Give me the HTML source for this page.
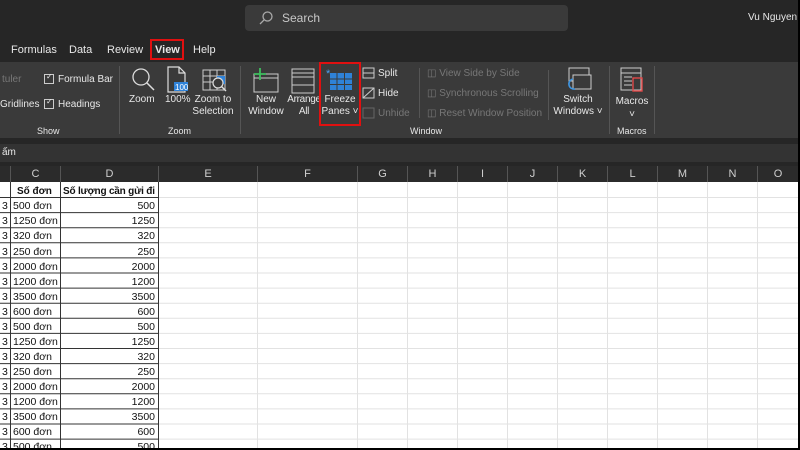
<!DOCTYPE html>
<html><head><meta charset="utf-8"><style>
*{margin:0;padding:0;box-sizing:border-box}
body{width:800px;height:450px;overflow:hidden;background:#000;font-family:"Liberation Sans",sans-serif;position:relative}
.a{position:absolute}
.t{color:#e8e8e8;font-size:10px;white-space:nowrap}
.g{color:#8a8a8a;font-size:10px;white-space:nowrap}
.c{text-align:center}
.sep{position:absolute;width:1px;background:#555}
.hd{position:absolute;top:166px;height:16px;color:#cfcfcf;font-size:11px;text-align:center;line-height:16px;border-left:1px solid #555}
</style></head><body>
<div class="a" style="left:0;top:0;width:798px;height:448px;background:#fff"></div>
<div class="a" style="left:0;top:0;width:798px;height:62px;background:#262626"></div>
<div class="a" style="left:245px;top:5px;width:323px;height:26px;background:#3a3a3a;border-radius:4px"></div>
<svg class="a" style="left:258px;top:10px" width="16" height="16"><circle cx="9.5" cy="6.5" r="4.5" fill="none" stroke="#aaa" stroke-width="1.3"/><line x1="6.3" y1="9.7" x2="2" y2="14" stroke="#aaa" stroke-width="1.3"/></svg>
<div class="a t" style="left:282px;top:11px;font-size:12px;color:#c8c8c8">Search</div>
<div class="a t" style="left:748px;top:12px;font-size:10px">Vu Nguyen I</div>
<div class="a t" style="left:11px;top:44px;font-size:11px">Formulas</div>
<div class="a t" style="left:69px;top:44px;font-size:11px">Data</div>
<div class="a t" style="left:107px;top:44px;font-size:11px">Review</div>
<div class="a" style="left:150px;top:39px;width:34px;height:21px;border:2px solid #e01010"></div>
<div class="a t" style="left:155px;top:44px;font-size:11px;font-weight:bold">View</div>
<div class="a t" style="left:193px;top:44px;font-size:11px">Help</div>
<div class="a" style="left:0;top:62px;width:798px;height:76px;background:#3a3a3a"></div>
<div class="a" style="left:0;top:138px;width:798px;height:28px;background:#262626"></div>
<div class="a" style="left:0;top:144px;width:798px;height:18px;background:#333"></div>
<div class="a t" style="left:2px;top:147px">ấm</div>
<div class="a g" style="left:2px;top:74px;color:#777">tuler</div>
<div class="a g" style="left:0px;top:99px;color:#e8e8e8">Gridlines</div>
<div class="a" style="left:44px;top:74px;width:10px;height:10px;border:1px solid #ccc"></div>
<div class="a t" style="left:46px;top:72px;font-size:8px">✓</div>
<div class="a t" style="left:58px;top:74px">Formula Bar</div>
<div class="a" style="left:44px;top:99px;width:10px;height:10px;border:1px solid #ccc"></div>
<div class="a t" style="left:46px;top:97px;font-size:8px">✓</div>
<div class="a t" style="left:58px;top:99px">Headings</div>
<div class="a t" style="left:37px;top:126px;font-size:9px">Show</div>
<div class="sep" style="left:119px;top:66px;height:68px"></div>
<svg class="a" style="left:129px;top:66px" width="28" height="28"><circle cx="12" cy="11" r="8" fill="none" stroke="#ddd" stroke-width="1.3"/><line x1="18" y1="17" x2="25" y2="24" stroke="#ddd" stroke-width="1.5"/></svg>
<div class="a t" style="left:129px;top:94px">Zoom</div>
<svg class="a" style="left:165px;top:66px" width="24" height="28"><path d="M3 1h11l6 6v19H3z" fill="none" stroke="#ddd" stroke-width="1.2"/><path d="M14 1v6h6" fill="none" stroke="#ddd" stroke-width="1.2"/><rect x="9" y="16" width="14" height="9" fill="#2f82d8"/><text x="10" y="24" font-size="8" fill="#fff" font-family="Liberation Sans">100</text></svg>
<div class="a t" style="left:165px;top:94px">100%</div>
<svg class="a" style="left:201px;top:68px" width="28" height="26"><rect x="2" y="2" width="22" height="20" fill="none" stroke="#ccc"/><path d="M2 8h22M2 14h22M9 2v20M16 2v20" stroke="#ccc"/><rect x="16" y="8" width="8" height="8" fill="#2f82d8"/><circle cx="17" cy="15" r="5" fill="#3a3a3a" stroke="#ddd" stroke-width="1.2"/><line x1="20.5" y1="18.5" x2="25" y2="23" stroke="#ddd" stroke-width="1.4"/></svg>
<div class="a t c" style="left:190px;top:94px;width:46px;line-height:12px">Zoom to<br>Selection</div>
<div class="a t" style="left:168px;top:126px;font-size:9px">Zoom</div>
<div class="sep" style="left:240px;top:66px;height:68px"></div>
<svg class="a" style="left:251px;top:66px" width="30" height="28"><rect x="3" y="8" width="24" height="18" fill="none" stroke="#ccc"/><path d="M3 12h24" stroke="#ccc"/><path d="M9 2v12M3 8h12" stroke="#3fbf5f" stroke-width="1.8"/></svg>
<div class="a t c" style="left:244px;top:94px;width:44px;line-height:12px">New<br>Window</div>
<svg class="a" style="left:289px;top:67px" width="28" height="28"><rect x="3" y="2" width="22" height="24" fill="none" stroke="#ccc"/><path d="M3 10h22M3 18h22M3 6h22" stroke="#ccc"/></svg>
<div class="a t c" style="left:284px;top:94px;width:40px;line-height:12px;letter-spacing:-0.3px">Arrange<br>All</div>
<div class="a" style="left:319px;top:62px;width:42px;height:64px;border:2px solid #e01010"></div>
<svg class="a" style="left:325px;top:66px" width="30" height="26"><rect x="5" y="7" width="22" height="17" fill="#2f82d8"/><path d="M5 13h22M5 18.5h22M12 7v17M19.5 7v17" stroke="#3a3a3a"/><text x="1" y="11" font-size="11" fill="#4aa0f0" font-family="Liberation Sans">*</text></svg>
<div class="a t c" style="left:320px;top:94px;width:40px;line-height:12px">Freeze<br>Panes ˅</div>
<svg class="a" style="left:362px;top:67px" width="13" height="12"><rect x="1" y="1" width="11" height="10" fill="none" stroke="#ccc"/><path d="M1 6h11" stroke="#ccc"/></svg>
<div class="a t" style="left:378px;top:68px">Split</div>
<svg class="a" style="left:362px;top:87px" width="13" height="12"><rect x="1" y="1" width="11" height="10" fill="none" stroke="#ccc"/><path d="M1 11L12 1" stroke="#ccc"/></svg>
<div class="a t" style="left:378px;top:88px">Hide</div>
<svg class="a" style="left:362px;top:107px" width="13" height="12"><rect x="1" y="1" width="11" height="10" fill="none" stroke="#666"/></svg>
<div class="a t" style="left:378px;top:108px;color:#777">Unhide</div>
<div class="sep" style="left:419px;top:68px;height:50px"></div>
<div class="a t" style="left:427px;top:68px;color:#777">◫ View Side by Side</div>
<div class="a t" style="left:427px;top:88px;color:#777">◫ Synchronous Scrolling</div>
<div class="a t" style="left:427px;top:108px;color:#777">◫ Reset Window Position</div>
<div class="a t" style="left:410px;top:126px;font-size:9px">Window</div>
<div class="sep" style="left:548px;top:70px;height:50px"></div>
<svg class="a" style="left:563px;top:66px" width="30" height="28"><rect x="6" y="2" width="20" height="13" fill="#3a3a3a" stroke="#ccc"/><rect x="10" y="9" width="18" height="14" fill="#3a3a3a" stroke="#ccc"/><path d="M10 13a5 5 0 0 0 2 10" fill="none" stroke="#3f95e0" stroke-width="1.6"/></svg>
<div class="a t c" style="left:551px;top:94px;width:54px;line-height:12px">Switch<br>Windows ˅</div>
<div class="sep" style="left:609px;top:66px;height:68px"></div>
<svg class="a" style="left:618px;top:66px" width="30" height="28"><rect x="3" y="2" width="20" height="22" fill="none" stroke="#ccc"/><path d="M3 7h20M6 11h8M6 15h8M6 19h8" stroke="#ccc"/><rect x="15" y="12" width="9" height="13" fill="none" stroke="#e04848" stroke-width="1.4"/></svg>
<div class="a t c" style="left:612px;top:95px;width:40px;line-height:13px">Macros<br>˅</div>
<div class="a t" style="left:617px;top:126px;font-size:9px">Macros</div>
<div class="sep" style="left:654px;top:66px;height:68px"></div>
<div class="a" style="left:0;top:166px;width:798px;height:16px;background:#2b2b2b"></div>
<div class="hd" style="left:10px;width:50px">C</div>
<div class="hd" style="left:60px;width:98px">D</div>
<div class="hd" style="left:158px;width:99px">E</div>
<div class="hd" style="left:257px;width:100px">F</div>
<div class="hd" style="left:357px;width:50px">G</div>
<div class="hd" style="left:407px;width:50px">H</div>
<div class="hd" style="left:457px;width:50px">I</div>
<div class="hd" style="left:507px;width:50px">J</div>
<div class="hd" style="left:557px;width:50px">K</div>
<div class="hd" style="left:607px;width:50px">L</div>
<div class="hd" style="left:657px;width:50px">M</div>
<div class="hd" style="left:707px;width:50px">N</div>
<div class="hd" style="left:757px;width:41px">O</div>
<svg class="a" style="left:0;top:182px" width="798" height="266">
<g stroke="#e2e2e2">
<path d="M257.5 0v266M357.5 0v266M407.5 0v266M457.5 0v266M507.5 0v266M557.5 0v266M607.5 0v266M657.5 0v266M707.5 0v266M757.5 0v266"/>
<path d="M158 15.5h640M158 30.6h640M158 45.7h640M158 60.8h640M158 75.9h640M158 91h640M158 106.1h640M158 121.2h640M158 136.3h640M158 151.4h640M158 166.5h640M158 181.6h640M158 196.7h640M158 211.8h640M158 226.9h640M158 242h640M158 257.1h640"/>
</g>
<g stroke="#333">
<path d="M10.5 0v266M60.5 0v266M158.5 0v266"/>
<path d="M0 15.5h158M0 30.6h158M0 45.7h158M0 60.8h158M0 75.9h158M0 91h158M0 106.1h158M0 121.2h158M0 136.3h158M0 151.4h158M0 166.5h158M0 181.6h158M0 196.7h158M0 211.8h158M0 226.9h158M0 242h158M0 257.1h158"/>
</g>
<g font-family="Liberation Sans" font-size="10" fill="#111">
<text x="17" y="12" font-weight="bold">Số đơn</text><text x="63" y="12" font-weight="bold" textLength="92">Số lượng cần gửi đi</text>
</g>
<g font-family="Liberation Sans" font-size="10.5" fill="#111">
<text x="2" y="27">3</text><text x="13" y="27">500 đơn</text><text x="155" y="27" text-anchor="end">500</text>
<text x="2" y="42">3</text><text x="13" y="42">1250 đơn</text><text x="155" y="42" text-anchor="end">1250</text>
<text x="2" y="57">3</text><text x="13" y="57">320 đơn</text><text x="155" y="57" text-anchor="end">320</text>
<text x="2" y="73">3</text><text x="13" y="73">250 đơn</text><text x="155" y="73" text-anchor="end">250</text>
<text x="2" y="88">3</text><text x="13" y="88">2000 đơn</text><text x="155" y="88" text-anchor="end">2000</text>
<text x="2" y="103">3</text><text x="13" y="103">1200 đơn</text><text x="155" y="103" text-anchor="end">1200</text>
<text x="2" y="118">3</text><text x="13" y="118">3500 đơn</text><text x="155" y="118" text-anchor="end">3500</text>
<text x="2" y="133">3</text><text x="13" y="133">600 đơn</text><text x="155" y="133" text-anchor="end">600</text>
<text x="2" y="148">3</text><text x="13" y="148">500 đơn</text><text x="155" y="148" text-anchor="end">500</text>
<text x="2" y="163">3</text><text x="13" y="163">1250 đơn</text><text x="155" y="163" text-anchor="end">1250</text>
<text x="2" y="178">3</text><text x="13" y="178">320 đơn</text><text x="155" y="178" text-anchor="end">320</text>
<text x="2" y="193">3</text><text x="13" y="193">250 đơn</text><text x="155" y="193" text-anchor="end">250</text>
<text x="2" y="208">3</text><text x="13" y="208">2000 đơn</text><text x="155" y="208" text-anchor="end">2000</text>
<text x="2" y="223">3</text><text x="13" y="223">1200 đơn</text><text x="155" y="223" text-anchor="end">1200</text>
<text x="2" y="238">3</text><text x="13" y="238">3500 đơn</text><text x="155" y="238" text-anchor="end">3500</text>
<text x="2" y="253">3</text><text x="13" y="253">600 đơn</text><text x="155" y="253" text-anchor="end">600</text>
<text x="2" y="268">3</text><text x="13" y="268">500 đơn</text><text x="155" y="268" text-anchor="end">500</text>
</g>
</svg>
</body></html>
